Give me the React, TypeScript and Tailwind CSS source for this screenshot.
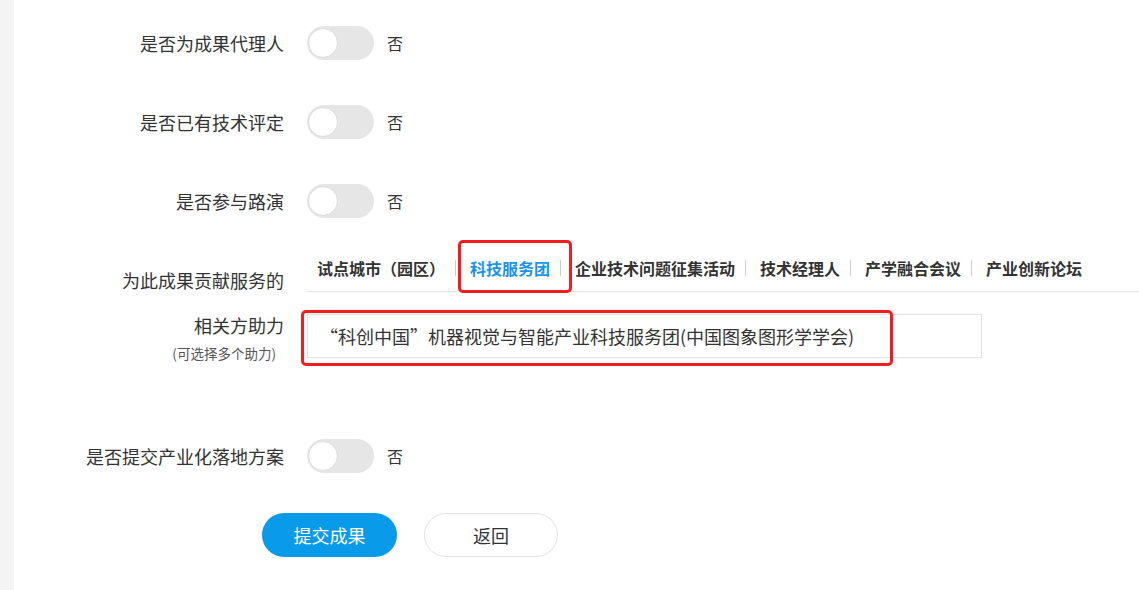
import React from "react";

function Switch() {
  return (
    <div className="flex items-center">
      <div className="relative w-[67px] h-[34px] rounded-full bg-[#e6e6e6]">
        <div className="absolute left-[1px] top-[2px] w-[30px] h-[30px] rounded-full bg-white border border-[#dcdcdc]" />
      </div>
      <span className="ml-[13px] text-[16px] text-[#333] leading-none">否</span>
    </div>
  );
}

function SwitchRow({ label, className = "" }: { label: string; className?: string }) {
  return (
    <div className={"flex items-center h-[34px] " + className}>
      <div className="w-[270px] shrink-0 text-right text-[18px] text-[#333] leading-[24px]">{label}</div>
      <div className="ml-[23px]">
        <Switch />
      </div>
    </div>
  );
}

const tabs = ["试点城市（园区）", "科技服务团", "企业技术问题征集活动", "技术经理人", "产学融合会议", "产业创新论坛"];

export default function App() {
  return (
    <div className="flex min-h-[590px] bg-white font-['Noto_Sans_CJK_SC','Noto_Sans',sans-serif]">
      <div className="w-[14px] shrink-0 bg-[#f4f4f4]" />
      <div className="flex-1 pt-[26px]">
        <SwitchRow label="是否为成果代理人" />
        <SwitchRow label="是否已有技术评定" className="mt-[45px]" />
        <SwitchRow label="是否参与路演" className="mt-[45px]" />

        <div className="flex items-start mt-[27px]">
          <div className="w-[270px] shrink-0 text-right text-[#333]">
            <div className="pt-[23px] text-[18px] leading-[24px]">为此成果贡献服务的</div>
            <div className="mt-[21px] text-[18px] leading-[24px]">相关方助力</div>
            <div className="mt-[7px] text-[13.5px] leading-[18px] pr-[8px] text-[#555]">(可选择多个助力)</div>
          </div>
          <div className="ml-[23px] flex-1 relative">
            <div className="h-[47px] border-b border-[#e5e5e5] flex items-center pl-[10px]">
              {tabs.map((t, i) => (
                <React.Fragment key={t}>
                  <span
                    className={
                      "text-[16px] font-bold leading-[22px] " +
                      (i === 1 ? "text-[#1a94e6]" : "text-[#333]")
                    }
                  >
                    {t}
                  </span>
                  {i < tabs.length - 1 && (
                    <span className="ml-[10px] mr-[14px] w-px h-[16px] bg-[#cfcfcf]" />
                  )}
                </React.Fragment>
              ))}
            </div>
            <div className="absolute left-[151px] top-[-5px] w-[114px] h-[53px] border-[3px] border-[#f41d1d] rounded-[5px]" />
            <div className="relative mt-[22px] w-[675px] h-[44px] border border-[#e3e3e3] flex items-center pl-[12px] text-[18px] text-[#333]">
              “科创中国”机器视觉与智能产业科技服务团(中国图象图形学学会)
              <div className="absolute left-[-7px] top-[-5px] w-[592px] h-[56px] border-[3px] border-[#f41d1d] rounded-[5px]" />
            </div>
          </div>
        </div>

        <SwitchRow label="是否提交产业化落地方案" className="mt-[77px]" />

        <div className="flex mt-[40px] pl-[248px]">
          <button className="w-[135px] h-[44px] rounded-full bg-[#0a9aea] text-white text-[18px]">提交成果</button>
          <button className="ml-[27px] w-[134px] h-[44px] rounded-full bg-white border border-[#e3e3e3] text-[#333] text-[18px]">返回</button>
        </div>
      </div>
    </div>
  );
}
